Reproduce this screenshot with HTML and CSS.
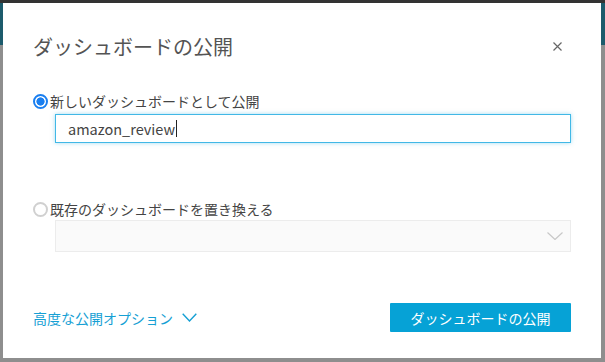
FILE: index.html
```html
<!DOCTYPE html>
<html lang="ja">
<head>
    <meta charset="UTF-8">
    <title>ダッシュボードの公開</title>
    <link rel="stylesheet" href="styles.css">
</head>
<body>
    <div class="backdrop">
        <div class="modal">
            <div class="modal-header">
                <h1>ダッシュボードの公開</h1>
                <span class="close">
                    <svg width="9" height="9" viewBox="0 0 9 9"><path d="M0.5 0.5L8.5 8.5M8.5 0.5L0.5 8.5" stroke="#666" stroke-width="1.2"/></svg>
                </span>
            </div>
            <div class="option first">
                <span class="radio checked"></span>
                <span class="label">新しいダッシュボードとして公開</span>
            </div>
            <div class="name-input">amazon_review<span class="caret"></span></div>

            <div class="option second">
                <span class="radio"></span>
                <span class="label">既存のダッシュボードを置き換える</span>
            </div>
            <div class="select">
                <svg width="16" height="8" viewBox="0 0 16 8"><path d="M0.5 0.5L8 7.5L15.5 0.5" fill="none" stroke="#c8c8c8" stroke-width="1.2"/></svg>
            </div>

            <div class="modal-footer">
                <span class="advanced">高度な公開オプション
                    <svg width="15" height="9" viewBox="0 0 15 9"><path d="M0.7 0.7L7.5 8L14.3 0.7" fill="none" stroke="#16a0d4" stroke-width="1.4"/></svg>
                </span>
                <button class="publish">ダッシュボードの公開</button>
            </div>
        </div>
    </div>
</body>
</html>
```

FILE: styles.css
```css
body {
    margin: 0;
    font-family: "Noto Sans CJK JP", "Noto Sans", sans-serif;
    color: #444;
}
.backdrop {
    width: 605px;
    height: 362px;
    overflow: hidden;
    background: linear-gradient(to bottom, #333 0, #333 3px, #1c5b6c 3px, #1c5b6c 45px, #8e8e8e 45px);
    padding: 3px 4px 0 3px;
    box-sizing: border-box;
}
.modal {
    background: #fff;
    height: 355px;
    padding: 0 30px 0 30px;
    box-sizing: border-box;
}
.modal-header {
    display: flex;
    justify-content: space-between;
    align-items: center;
    padding-top: 28px;
}
.modal-header h1 {
    margin: 0;
    font-size: 20px;
    line-height: 32px;
    font-weight: 400;
    color: #545454;
}
.close {
    display: flex;
    margin-right: 9px;
    margin-top: -2px;
}
.option {
    display: flex;
    align-items: center;
    height: 20px;
    font-size: 14px;
    line-height: 20px;
    color: #444;
}
.option.first {
    margin-top: 28px;
}
.option.second {
    margin-top: 56px;
}
.radio {
    flex: none;
    width: 15px;
    height: 15px;
    border-radius: 50%;
    border: 2px solid #d0d0d0;
    box-sizing: border-box;
    margin-right: 2px;
}
.radio.checked {
    border: 2px solid #1a7ff0;
    background: radial-gradient(circle, #1a7ff0 0, #1a7ff0 3.8px, #fff 4.4px);
}
.name-input {
    margin: 3px 0 0 22px;
    height: 29px;
    border: 1px solid #41b8e6;
    box-shadow: 0 0 4px rgba(65, 184, 230, 0.5);
    box-sizing: border-box;
    padding: 0 12px;
    font-size: 14.5px;
    line-height: 27px;
    color: #444;
    display: flex;
    align-items: center;
}
.caret {
    display: inline-block;
    width: 1px;
    height: 17px;
    background: #222;
    margin-left: 1px;
}
.select {
    margin: 1px 0 0 22px;
    height: 32px;
    border: 1px solid #ececec;
    background: #fafafa;
    box-sizing: border-box;
    display: flex;
    justify-content: flex-end;
    align-items: center;
    padding-right: 7px;
}
.modal-footer {
    display: flex;
    justify-content: space-between;
    align-items: center;
    margin-top: 51px;
}
.advanced {
    display: flex;
    align-items: center;
    gap: 9px;
    font-size: 14px;
    color: #16a0d4;
}
.publish {
    width: 181px;
    height: 29px;
    border: none;
    border-radius: 1px;
    background: #06a2d6;
    color: #fff;
    font-family: "Noto Sans CJK JP", "Noto Sans", sans-serif;
    font-size: 14px;
    padding: 0;
}
```
